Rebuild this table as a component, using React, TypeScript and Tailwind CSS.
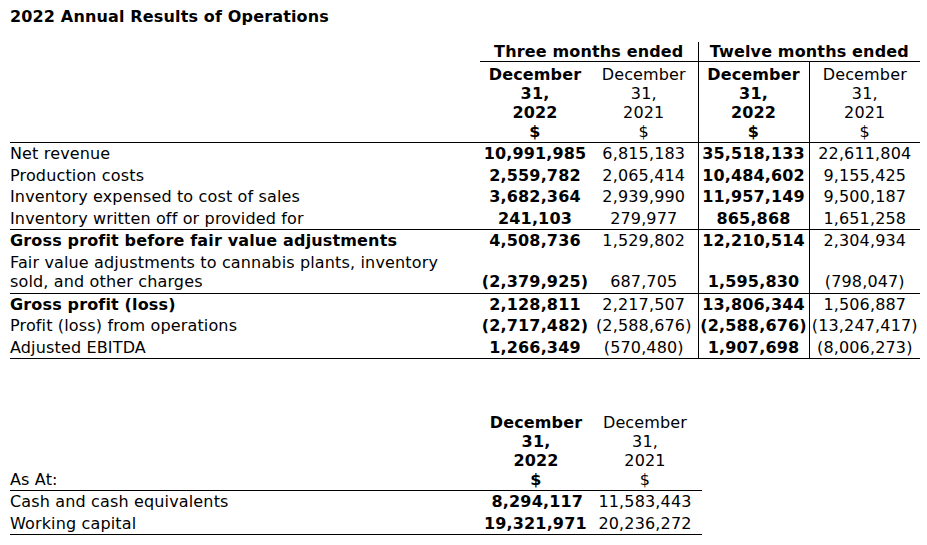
import React from 'react';

// Rows of the annual results table: label, four values, and which rows carry a rule below
type Row = {
  label: React.ReactNode;
  values: [string, string, string, string];
  bold?: boolean;
  ruleBelow?: boolean;
};

const rows: Row[] = [
  { label: 'Net revenue', values: ['10,991,985', '6,815,183', '35,518,133', '22,611,804'] },
  { label: 'Production costs', values: ['2,559,782', '2,065,414', '10,484,602', '9,155,425'] },
  { label: 'Inventory expensed to cost of sales', values: ['3,682,364', '2,939,990', '11,957,149', '9,500,187'] },
  { label: 'Inventory written off or provided for', values: ['241,103', '279,977', '865,868', '1,651,258'], ruleBelow: true },
  { label: 'Gross profit before fair value adjustments', values: ['4,508,736', '1,529,802', '12,210,514', '2,304,934'], bold: true },
  {
    label: (
      <>
        Fair value adjustments to cannabis plants, inventory
        <br />
        sold, and other charges
      </>
    ),
    values: ['(2,379,925)', '687,705', '1,595,830', '(798,047)'],
    ruleBelow: true,
  },
  { label: 'Gross profit (loss)', values: ['2,128,811', '2,217,507', '13,806,344', '1,506,887'], bold: true },
  { label: 'Profit (loss) from operations', values: ['(2,717,482)', '(2,588,676)', '(2,588,676)', '(13,247,417)'] },
  { label: 'Adjusted EBITDA', values: ['1,266,349', '(570,480)', '1,907,698', '(8,006,273)'], ruleBelow: true },
];

const DateHead = ({ year, bold }: { year: string; bold?: boolean }) => (
  <span className={bold ? 'font-bold' : ''}>
    December
    <br />
    31,
    <br />
    {year}
    <br />$
  </span>
);

export default function App() {
  return (
    <div className="bg-white text-black font-['DejaVu_Sans','Verdana',sans-serif] text-[16px] leading-[19.5px] tracking-[0.15px] px-[10px] pt-[7px] pb-[10px] min-h-[545px]">
      <p className="font-bold">2022 Annual Results of Operations</p>

      {/* Main results table */}
      <table className="mt-[15px] w-[910px] table-fixed border-collapse">
        <colgroup>
          <col className="w-[470px]" />
          <col className="w-[110px]" />
          <col className="w-[108px]" />
          <col className="w-[111px]" />
          <col className="w-[111px]" />
        </colgroup>
        <thead>
          <tr>
            <th className="p-0" />
            <th colSpan={2} className="p-0 font-bold text-center border-b border-r border-black whitespace-nowrap">
              Three months ended
            </th>
            <th colSpan={2} className="p-0 font-bold text-center border-b border-black whitespace-nowrap">
              Twelve months ended
            </th>
          </tr>
          <tr className="border-b border-black leading-[19px]">
            <th className="p-0" />
            <th className="pt-[3px] pb-px px-0 text-center align-bottom font-normal">
              <DateHead year="2022" bold />
            </th>
            <th className="pt-[3px] pb-px px-0 text-center align-bottom font-normal border-r border-black">
              <DateHead year="2021" />
            </th>
            <th className="pt-[3px] pb-px px-0 text-center align-bottom font-normal border-r border-black">
              <DateHead year="2022" bold />
            </th>
            <th className="pt-[3px] pb-px px-0 text-center align-bottom font-normal">
              <DateHead year="2021" />
            </th>
          </tr>
        </thead>
        <tbody>
          {rows.map((row, i) => (
            <tr key={i} className={row.ruleBelow ? 'border-b border-black' : ''}>
              <td className={`py-px px-0 text-left align-bottom ${row.bold ? 'font-bold' : ''}`}>{row.label}</td>
              <td className="py-px px-0 text-center align-bottom font-bold whitespace-nowrap">{row.values[0]}</td>
              <td className="py-px px-0 text-center align-bottom whitespace-nowrap border-r border-black">{row.values[1]}</td>
              <td className="py-px px-0 text-center align-bottom font-bold whitespace-nowrap border-r border-black">{row.values[2]}</td>
              <td className="py-px px-0 text-center align-bottom whitespace-nowrap">{row.values[3]}</td>
            </tr>
          ))}
        </tbody>
      </table>

      {/* Balance sheet snapshot */}
      <table className="mt-[51px] w-[692px] table-fixed border-collapse">
        <colgroup>
          <col className="w-[474px]" />
          <col className="w-[104px]" />
          <col className="w-[114px]" />
        </colgroup>
        <thead>
          <tr className="border-b border-black leading-[19px]">
            <th className="pt-[3px] pb-px px-0 text-left align-bottom font-normal">As At:</th>
            <th className="pt-[3px] pb-px px-0 text-center align-bottom font-normal">
              <DateHead year="2022" bold />
            </th>
            <th className="pt-[3px] pb-px px-0 text-center align-bottom font-normal">
              <DateHead year="2021" />
            </th>
          </tr>
        </thead>
        <tbody>
          <tr>
            <td className="py-px px-0">Cash and cash equivalents</td>
            <td className="py-px pl-0 pr-[5px] text-right font-bold whitespace-nowrap">8,294,117</td>
            <td className="py-px px-0 text-center whitespace-nowrap">11,583,443</td>
          </tr>
          <tr className="border-b border-black">
            <td className="py-px px-0">Working capital</td>
            <td className="py-px pl-0 pr-[5px] text-right font-bold whitespace-nowrap">19,321,971</td>
            <td className="py-px px-0 text-center whitespace-nowrap">20,236,272</td>
          </tr>
        </tbody>
      </table>
    </div>
  );
}
